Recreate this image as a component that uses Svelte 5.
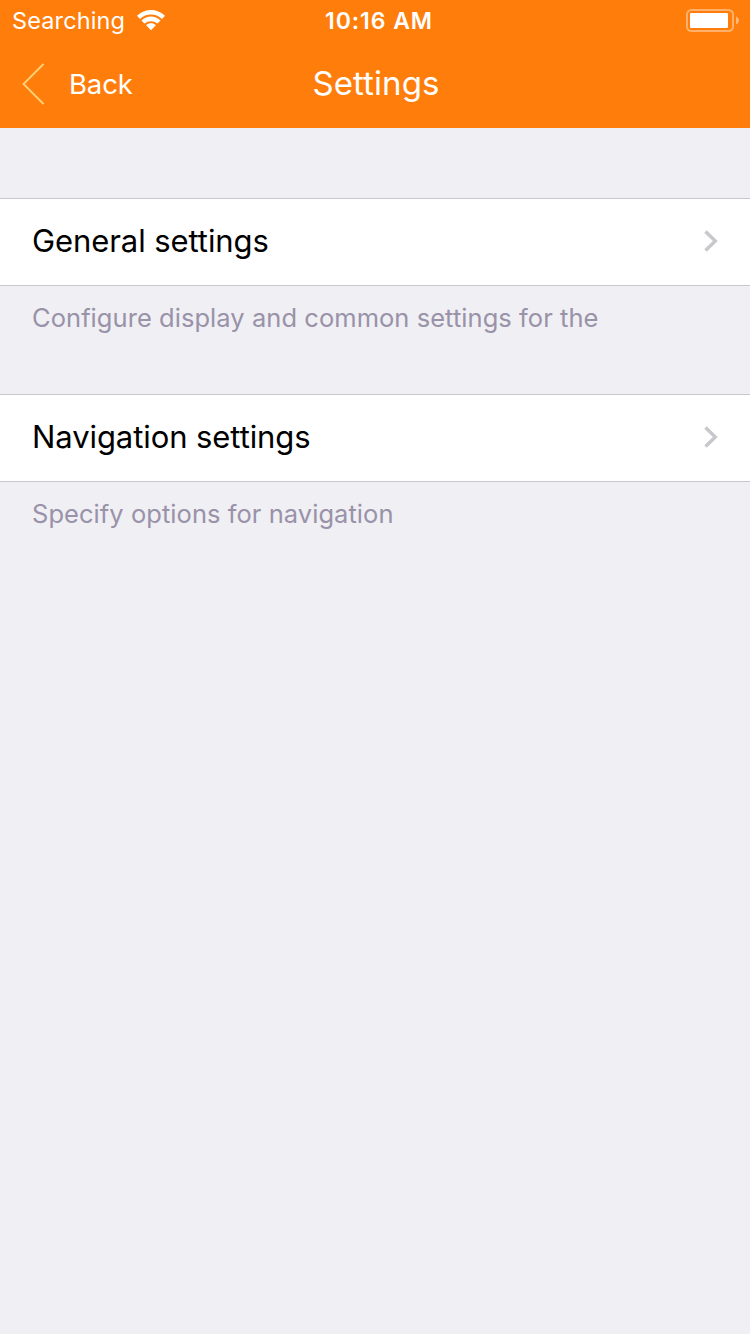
<script>
  const groups = [
    { title: 'General settings', note: 'Configure display and common settings for the' },
    { title: 'Navigation settings', note: 'Specify options for navigation' },
  ];
</script>

<div class="screen">
  <header>
    <div class="status">
      <div class="carrier">
        <span>Searching</span>
        <svg class="wifi" width="28" height="21" viewBox="0 0 28 21" fill="#fff">
          <path d="M0 5.800C8-1.900 20-1.900 28 5.800L25 8.900C18.700 3 9.300 3 3 8.900Z" />
          <path d="M4.400 10.500C10 5.300 18 5.300 23.600 10.500L20.500 13.600C16.700 10.300 11.300 10.300 7.500 13.600Z" />
          <path d="M9.100 15.300C12 12.700 16 12.700 18.900 15.300L14 20.300Z" />
        </svg>
      </div>
      <span class="time">10:16 AM</span>
      <svg class="battery" width="54" height="24" viewBox="0 0 54 24">
        <rect x="1" y="1" width="46" height="21" rx="4.500" fill="none" stroke="#fff" stroke-opacity=".4" stroke-width="2" />
        <rect x="4" y="4" width="38" height="15" rx="1" fill="#fff" />
        <path d="M50 7.500C54 9 54 14 50 15.500Z" fill="#fff" fill-opacity=".45" />
      </svg>
    </div>
    <nav>
      <button class="back">
        <svg width="24" height="42" viewBox="0 0 24 42"><path d="M21.500 1L1.500 21L21.500 41" fill="none" stroke="#ffd27a" stroke-width="1.800" /></svg>
        <span>Back</span>
      </button>
      <h1>Settings</h1>
    </nav>
  </header>

  <main>
    {#each groups as group}
      <section>
        <button class="row">
          <span>{group.title}</span>
          <svg width="14" height="22" viewBox="0 0 14 22"><path d="M1.500 1.500L11.300 11L1.500 20.500" fill="none" stroke="#c7c7cc" stroke-width="3.400" /></svg>
        </button>
        <p>{group.note}</p>
      </section>
    {/each}
  </main>
</div>

<style>
  :global(body) { margin: 0; background: #efeff4; }
  .screen { width: 750px; min-height: 1334px; background: #efeff4; font-family: Inter, sans-serif; }
  button { border: 0; padding: 0; background: none; font: inherit; color: inherit; text-align: left; }
  svg { display: block; flex: none; }
  header { height: 128px; background: #ff7d0a; color: #fff; }
  .status { height: 40px; display: grid; grid-template-columns: 1fr auto 1fr; align-items: center; padding: 1px 10px 0 12px; box-sizing: border-box; }
  .carrier { display: flex; align-items: center; gap: 12px; font-size: 23.500px; font-weight: 400; letter-spacing: .12px; }
  .time { font-size: 23px; font-weight: 600; letter-spacing: .950px; padding-left: 6px; }
  .battery { justify-self: end; }
  nav { height: 88px; display: grid; grid-template-columns: 1fr auto 1fr; align-items: center; }
  .back { display: flex; align-items: center; gap: 23px; padding-left: 22px; font-size: 27.500px; font-weight: 400; letter-spacing: -.15px; }
  h1 { margin: 0 0 2px; padding-left: 2px; font-size: 33px; font-weight: 400; letter-spacing: .1px; }
  main { padding-top: 70px; }
  section { height: 196px; }
  .row { width: 100%; height: 88px; box-sizing: border-box; display: flex; align-items: center; justify-content: space-between; padding: 0 32px 2px; background: #fff; border-top: 1px solid #c8c7cc; border-bottom: 1px solid #c8c7cc; color: #000; font-size: 31px; letter-spacing: -.08px; }
  .row span { padding-bottom: 2px; }
  p { margin: 0; padding: 16px 32px 0; font-size: 25.500px; line-height: 32px; letter-spacing: .05px; color: #9992a8; white-space: nowrap; }
</style>
